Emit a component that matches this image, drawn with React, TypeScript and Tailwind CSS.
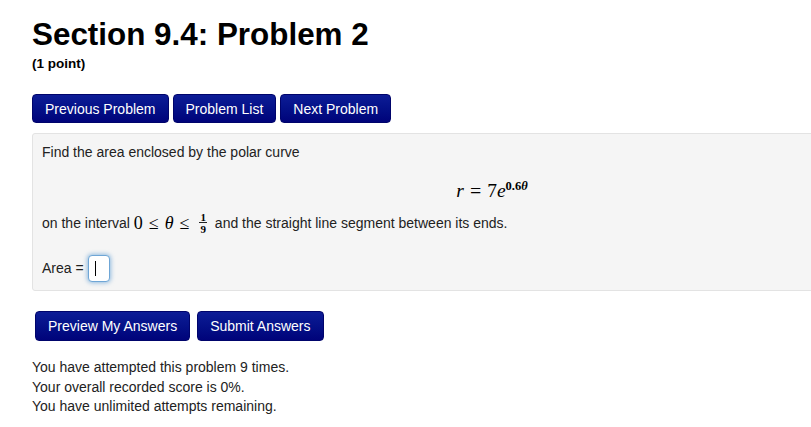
import React from "react";

const sans = { fontFamily: '"Liberation Sans", Arial, sans-serif' };
const serif = { fontFamily: '"Liberation Serif", "Times New Roman", serif' };

function NavButton({ label }: { label: string }) {
  return (
    <button className="h-[29px] rounded-[4px] border border-[#00046b] bg-gradient-to-b from-[#0d1c96] to-[#00037a] px-3 text-[14px] leading-none text-white">
      {label}
    </button>
  );
}

function Fraction({ top, bottom }: { top: string; bottom: string }) {
  return (
    <span className="mx-[4px] inline-flex flex-col items-center align-middle text-[11px] font-bold leading-[10px] text-black" style={serif}>
      <span className="px-[1px]">{top}</span>
      <span className="h-px w-full bg-[#222]" />
      <span className="px-[1px] pt-[1px]">{bottom}</span>
    </span>
  );
}

export default function App() {
  return (
    <div className="min-h-screen overflow-hidden bg-white pl-8 text-[#222]" style={sans}>
      <h1 className="pt-[17px] text-[31.4px] font-bold leading-[35px] text-black">Section 9.4: Problem 2</h1>
      <div className="mt-[4px] text-[13.5px] font-bold leading-[15px] text-black">(1 point)</div>

      <div className="mt-[23px] flex gap-[4px]">
        <NavButton label="Previous Problem" />
        <NavButton label="Problem List" />
        <NavButton label="Next Problem" />
      </div>

      <div className="mt-[10px] w-[920px] rounded-[3px] border border-[#e3e3e3] bg-[#f5f5f5] px-[9px] pt-[9px] pb-[8px] text-[14px]">
        <p className="leading-[18px]">Find the area enclosed by the polar curve</p>

        <div className="mt-[16px] flex h-[24px] items-end justify-center text-[19.5px] leading-[20px] text-black" style={serif}>
          <span className="italic">r</span>
          <span className="mx-[6px] text-[20px]">=</span>
          <span>7</span>
          <span className="italic">e</span>
          <span className="relative -top-[9px] text-[12.5px] font-bold leading-none">
            0.6<span className="italic">θ</span>
          </span>
        </div>

        <p className="mt-[11px] flex items-center leading-[22px]">
          <span>on the interval&nbsp;</span>
          <span className="text-[18px] text-black" style={serif}>
            0<span className="mx-[6px]">≤</span><span className="italic">θ</span><span className="mx-[6px]">≤</span>
          </span>
          <Fraction top="1" bottom="9" />
          <span>&nbsp;and the straight line segment between its ends.</span>
        </p>

        <div className="mt-[21px] flex items-center">
          <span>Area =&nbsp;</span>
          <span className="flex h-[27px] w-[22px] items-center rounded-[4px] border border-[#6fa6d6] bg-white pl-[6px] shadow-[0_0_4px_1px_rgba(82,150,210,0.6)]">
            <span className="h-[15px] w-px bg-black" />
          </span>
        </div>
      </div>

      <div className="mt-[20px] flex gap-[7px] pl-[3px]">
        <button className="h-[30px] rounded-[4px] border border-[#00046b] bg-gradient-to-b from-[#0d1c96] to-[#00037a] px-3 text-[14px] leading-none text-white">
          Preview My Answers
        </button>
        <button className="h-[30px] rounded-[4px] border border-[#00046b] bg-gradient-to-b from-[#0d1c96] to-[#00037a] px-3 text-[14px] leading-none text-white">
          Submit Answers
        </button>
      </div>

      <div className="mt-[17px] text-[14px] leading-[19.5px]">
        <p>You have attempted this problem 9 times.</p>
        <p>Your overall recorded score is 0%.</p>
        <p>You have unlimited attempts remaining.</p>
      </div>
    </div>
  );
}
